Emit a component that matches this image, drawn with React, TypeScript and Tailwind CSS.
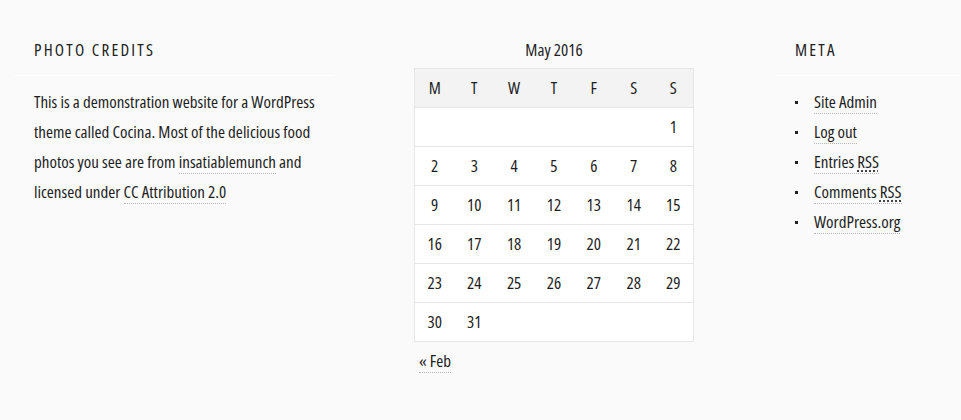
import React from 'react';

const weeks: (number | null)[][] = [
  [null, null, null, null, null, null, 1],
  [2, 3, 4, 5, 6, 7, 8],
  [9, 10, 11, 12, 13, 14, 15],
  [16, 17, 18, 19, 20, 21, 22],
  [23, 24, 25, 26, 27, 28, 29],
  [30, 31, null, null, null, null, null],
];

const days = ['M', 'T', 'W', 'T', 'F', 'S', 'S'];

function Link({ children }: { children: React.ReactNode }) {
  return <span className="border-b border-dotted border-[#b5b5b5]">{children}</span>;
}

function Rss() {
  return <span className="underline decoration-dotted decoration-[#222] underline-offset-[3px]">RSS</span>;
}

function WidgetTitle({ children }: { children: React.ReactNode }) {
  return (
    <h2 className="h-[40px] border-b border-white pl-5 text-[17px] leading-[28px] tracking-[0.13em] uppercase text-[#222]">
      {children}
    </h2>
  );
}

export default function App() {
  const meta = [
    <>Site Admin</>,
    <>Log out</>,
    <>Entries <Rss /></>,
    <>Comments <Rss /></>,
    <>WordPress.org</>,
  ];

  return (
    <div
      className="min-h-[420px] bg-[#fafafa] pt-[36px] flex text-[#1e1e1e] font-stretch-condensed"
      style={{ fontFamily: '"Open Sans", "Liberation Sans", sans-serif' }}
    >
      {/* Photo credits */}
      <div className="ml-[14px] w-[320px]">
        <WidgetTitle>Photo Credits</WidgetTitle>
        <p className="mt-[11px] pl-5 text-[17px] leading-[30px]">
          This is a demonstration website for a WordPress theme called Cocina. Most of the delicious food
          photos you see are from <Link>insatiablemunch</Link> and licensed under <Link>CC Attribution 2.0</Link>
        </p>
      </div>

      {/* Calendar */}
      <div className="ml-[80px] w-[280px]">
        <div className="text-center text-[17px] leading-[28px] mb-[4px]">May 2016</div>
        <table className="w-full border-collapse border border-[#e6e6e6] bg-white text-[17px] table-fixed">
          <thead>
            <tr className="h-[39px] bg-[#f3f3f3]">
              {days.map((d, i) => (
                <th key={i} className="font-normal text-center p-0">{d}</th>
              ))}
            </tr>
          </thead>
          <tbody>
            {weeks.map((w, i) => (
              <tr key={i} className="h-[39px] border-t border-[#e6e6e6]">
                {w.map((d, j) => (
                  <td key={j} className="text-center p-0">{d ?? ''}</td>
                ))}
              </tr>
            ))}
          </tbody>
        </table>
        <div className="mt-[4px] pl-[5px] text-[17px] leading-[30px]">
          <Link>« Feb</Link>
        </div>
      </div>

      {/* Meta */}
      <div className="ml-[81px] flex-1 mr-[1px]">
        <WidgetTitle>Meta</WidgetTitle>
        <ul className="mt-[11px] pl-5 text-[17px]">
          {meta.map((m, i) => (
            <li key={i} className="flex items-center h-[30px]">
              <span className="w-[3px] h-[3px] bg-[#222] mr-[16px] shrink-0" />
              <div className="leading-[30px]">
                <Link>{m}</Link>
              </div>
            </li>
          ))}
        </ul>
      </div>
    </div>
  );
}
